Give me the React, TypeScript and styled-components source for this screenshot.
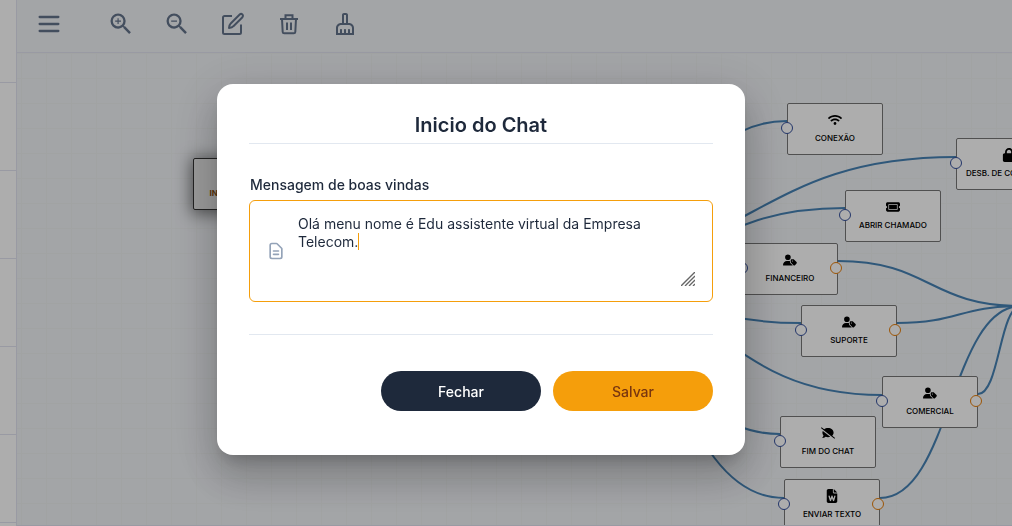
import React from 'react';
import styled, { createGlobalStyle } from 'styled-components';
import { HiOutlineDocumentText, HiOutlineMenu } from 'react-icons/hi';
import { MdZoomIn, MdZoomOut, MdOutlineCleaningServices } from 'react-icons/md';
import { FaWifi } from 'react-icons/fa';
import { FaUserTag, FaCommentSlash, FaFileWord, FaTicket, FaLock, FaPlay } from 'react-icons/fa6';
import type { IconType } from 'react-icons';

const GlobalStyle = createGlobalStyle`
  * { box-sizing: border-box; }
  body {
    margin: 0;
    font-family: Inter, 'Liberation Sans', sans-serif;
    color: #1e293b;
    background: #f1f3f7;
  }
  button, textarea { font-family: inherit; }
`;

const Shell = styled.div`
  display: grid;
  grid-template-columns: 17px minmax(0, 1fr);
  height: 100vh;
  overflow: hidden;
`;

const Sidebar = styled.ul`
  margin: 0;
  padding: 0;
  list-style: none;
  background: #ffffff;
  border-right: 1px solid #e2e3f0;
  overflow: hidden;
`;

const SidebarItem = styled.li`
  height: 88px;
  border-bottom: 1px solid #e2e3f0;

  &:first-child {
    height: 83px;
  }
`;

const Main = styled.main`
  display: flex;
  flex-direction: column;
  min-width: 0;
`;

const Toolbar = styled.header`
  display: flex;
  align-items: center;
  gap: 16px;
  height: 53px;
  padding: 0 12px 5px;
  border-bottom: 1px solid #e2e3f0;
`;

const ToolButton = styled.button<{ $lead?: boolean }>`
  display: flex;
  align-items: center;
  justify-content: center;
  width: 40px;
  height: 40px;
  margin-right: ${(p) => (p.$lead ? '16px' : '0')};
  padding: 0;
  border: 0;
  background: none;
  color: #64748b;
`;

const Canvas = styled.section`
  position: relative;
  flex: 1;
  min-height: 0;
  overflow: hidden;
  border-bottom: 1px solid #e2e3f0;
  background-image: linear-gradient(to right, #eef0f1 1px, transparent 1px),
    linear-gradient(to bottom, #eef0f1 1px, transparent 1px);
  background-size: 25px 25px;
  background-position: 4px 0;
`;

const Edges = styled.svg`
  position: absolute;
  inset: 0;
  width: 100%;
  height: 100%;
  fill: none;
  stroke: #4682b4;
  stroke-width: 2;
`;

const Node = styled.div<{ $x: number; $y: number; $selected?: boolean }>`
  position: absolute;
  left: ${(p) => p.$x}px;
  top: ${(p) => p.$y}px;
  display: flex;
  flex-direction: column;
  align-items: center;
  gap: 5px;
  min-width: 96px;
  height: 52px;
  padding: 9px 9px 0;
  border: 1px solid ${(p) => (p.$selected ? '#333333' : '#777777')};
  border-radius: 2px;
  background: ${(p) => (p.$selected ? '#e5e5e5' : '#ffffff')};
  box-shadow: ${(p) => (p.$selected ? '0 2px 16px 2px rgba(0, 0, 0, 0.5)' : 'none')};
  color: ${(p) => (p.$selected ? '#854d0e' : '#000000')};
  font-size: 8px;
  line-height: 12px;
  font-weight: ${(p) => (p.$selected ? 700 : 500)};
  white-space: nowrap;
`;

const Port = styled.span<{ $side: 'in' | 'out' }>`
  position: absolute;
  top: 18px;
  ${(p) => (p.$side === 'in' ? 'left: -7px;' : 'right: -5px;')}
  width: 12px;
  height: 12px;
  border: 1px solid ${(p) => (p.$side === 'in' ? '#34509c' : '#e67e0a')};
  border-radius: 50%;
  background: #ffffff;
`;

const Backdrop = styled.div`
  position: fixed;
  inset: 0;
  display: flex;
  align-items: center;
  justify-content: center;
  padding: 13px 50px 0 0;
  background: rgba(0, 0, 0, 0.32);
`;

const Dialog = styled.form`
  width: 100%;
  max-width: 528px;
  padding: 25px 32px 44px;
  border-radius: 16px;
  background: #ffffff;
  box-shadow: 0 11px 15px -7px rgba(0, 0, 0, 0.2), 0 24px 38px 3px rgba(0, 0, 0, 0.14),
    0 9px 46px 8px rgba(0, 0, 0, 0.12);
`;

const Title = styled.h2`
  margin: 0 0 32px;
  padding-bottom: 2px;
  border-bottom: 1px solid #e2e8f0;
  font-size: 20px;
  line-height: 32px;
  font-weight: 600;
  text-align: center;
`;

const FieldLabel = styled.label`
  display: block;
  padding: 0 1px 6px;
  font-size: 14px;
  line-height: 18px;
  font-weight: 500;
`;

const Field = styled.div`
  position: relative;
  display: flex;
  align-items: center;
  gap: 12px;
  padding: 14px 16px;
  border: 1px solid #f59e0b;
  border-radius: 6px;
  color: #94a3b8;

  > svg {
    flex: none;
  }
`;

const Message = styled.textarea`
  flex: 1;
  min-width: 0;
  height: 72px;
  padding: 0;
  border: 0;
  outline: 0;
  resize: none;
  background: none;
  color: #1e293b;
  caret-color: #f59e0b;
  font-size: 14px;
  line-height: 18px;
`;

const Caret = styled.span`
  position: absolute;
  left: 108px;
  top: 32px;
  width: 1px;
  height: 17px;
  background: #f59e0b;
`;

const Grip = styled.svg`
  position: absolute;
  right: 17px;
  bottom: 15px;
  width: 14px;
  height: 14px;
  fill: none;
  stroke: #666666;
  stroke-width: 1.4;
`;

const Actions = styled.footer`
  display: flex;
  justify-content: flex-end;
  gap: 12px;
  margin-top: 32px;
  padding-top: 36px;
  border-top: 1px solid #e2e8f0;
`;

const PillButton = styled.button<{ $primary?: boolean }>`
  width: 160px;
  height: 40px;
  border: 0;
  border-radius: 20px;
  background: ${(p) => (p.$primary ? '#f59e0b' : '#1e293b')};
  color: ${(p) => (p.$primary ? '#78350f' : '#ffffff')};
  font-size: 14px;
  font-weight: 500;
`;

const EditIcon = () => (
  <svg width="24" height="24" viewBox="0 0 24 24" fill="none" stroke="currentColor" strokeWidth="2" strokeLinejoin="round">
    <path d="M11 4H3.500A1.500 1.500 0 0 0 2 5.500V20.500A1.500 1.500 0 0 0 3.500 22H18.500A1.500 1.500 0 0 0 20 20.500V12.500" />
    <path d="M18.700 2.500a1.900 1.900 0 0 1 2.700 2.700L12.400 14.200Q11.200 15.700 8 16Q8.300 12.800 9.700 11.500Z" />
  </svg>
);

const TrashIcon = () => (
  <svg width="24" height="24" viewBox="0 0 24 24" fill="none" stroke="currentColor" strokeWidth="2">
    <path d="M3 7H21M8.500 7V3.300H15.500V7M5 7L5.700 20Q5.800 21.300 7.200 21.300H16.800Q18.200 21.300 18.300 20L19 7" />
    <path d="M10 10.500V18M14 10.500V18" />
  </svg>
);

type FlowNode = {
  label: string;
  x: number;
  y: number;
  icon: IconType;
  input?: boolean;
  output?: boolean;
  selected?: boolean;
};

const nodes: FlowNode[] = [
  { label: 'INICIO DO CHAT', x: 176, y: 105, icon: FaPlay, output: true, selected: true },
  { label: 'CONEXÃO', x: 770, y: 50, icon: FaWifi, input: true },
  { label: 'DESB. DE CONFIANÇA', x: 939, y: 85, icon: FaLock, input: true },
  { label: 'ABRIR CHAMADO', x: 828, y: 137, icon: FaTicket, input: true },
  { label: 'FINANCEIRO', x: 725, y: 190, icon: FaUserTag, input: true, output: true },
  { label: 'SUPORTE', x: 784, y: 252, icon: FaUserTag, input: true, output: true },
  { label: 'COMERCIAL', x: 865, y: 323, icon: FaUserTag, input: true, output: true },
  { label: 'FIM DO CHAT', x: 763, y: 363, icon: FaCommentSlash, input: true },
  { label: 'ENVIAR TEXTO', x: 767, y: 426, icon: FaFileWord, input: true, output: true },
];

// Each edge: start x, start y, end x, end y.
const edges: [number, number, number, number][] = [
  [533, 238, 770, 68],
  [533, 213, 939, 104],
  [533, 233, 828, 155],
  [533, 221, 784, 270],
  [533, 221, 865, 342],
  [533, 230, 763, 381],
  [533, 189, 767, 445],
  [821, 208, 1004, 253],
  [880, 270, 1004, 253],
  [961, 341, 1004, 253],
  [863, 445, 1004, 253],
];

const edgePath = ([x1, y1, x2, y2]: [number, number, number, number]) => {
  const mid = (x1 + x2) / 2;
  return `M${x1} ${y1}C${mid} ${y1} ${mid} ${y2} ${x2} ${y2}`;
};

export default function App() {
  return (
    <>
      <GlobalStyle />
      <Shell>
        <Sidebar>
          {[0, 1, 2, 3, 4, 5].map((i) => (
            <SidebarItem key={i} />
          ))}
        </Sidebar>
        <Main>
          <Toolbar>
            <ToolButton $lead aria-label="Menu"><HiOutlineMenu size={28} /></ToolButton>
            <ToolButton aria-label="Aumentar zoom"><MdZoomIn size={28} /></ToolButton>
            <ToolButton aria-label="Diminuir zoom"><MdZoomOut size={28} /></ToolButton>
            <ToolButton aria-label="Editar"><EditIcon /></ToolButton>
            <ToolButton aria-label="Excluir"><TrashIcon /></ToolButton>
            <ToolButton aria-label="Limpar"><MdOutlineCleaningServices size={24} /></ToolButton>
          </Toolbar>
          <Canvas>
            <Edges aria-hidden="true">
              {edges.map((e) => (
                <path key={e.join()} d={edgePath(e)} />
              ))}
            </Edges>
            {nodes.map(({ label, x, y, icon: Icon, input, output, selected }) => (
              <Node key={label} $x={x} $y={y} $selected={selected}>
                {input && <Port $side="in" />}
                <Icon size={14} />
                {label}
                {output && <Port $side="out" />}
              </Node>
            ))}
          </Canvas>
        </Main>
      </Shell>
      <Backdrop>
        <Dialog role="dialog" aria-labelledby="dialog-title" onSubmit={(e) => e.preventDefault()}>
          <Title id="dialog-title">Inicio do Chat</Title>
          <FieldLabel htmlFor="message">Mensagem de boas vindas</FieldLabel>
          <Field>
            <HiOutlineDocumentText size={20} />
            <Message id="message" defaultValue="Olá menu nome é Edu assistente virtual da Empresa Telecom." />
            <Caret />
            <Grip viewBox="0 0 14 14" aria-hidden="true">
              <path d="M0 14L14 0M4 14L14 4M8 14L14 8M12 14L14 12" />
            </Grip>
          </Field>
          <Actions>
            <PillButton type="button">Fechar</PillButton>
            <PillButton type="submit" $primary>Salvar</PillButton>
          </Actions>
        </Dialog>
      </Backdrop>
    </>
  );
}
